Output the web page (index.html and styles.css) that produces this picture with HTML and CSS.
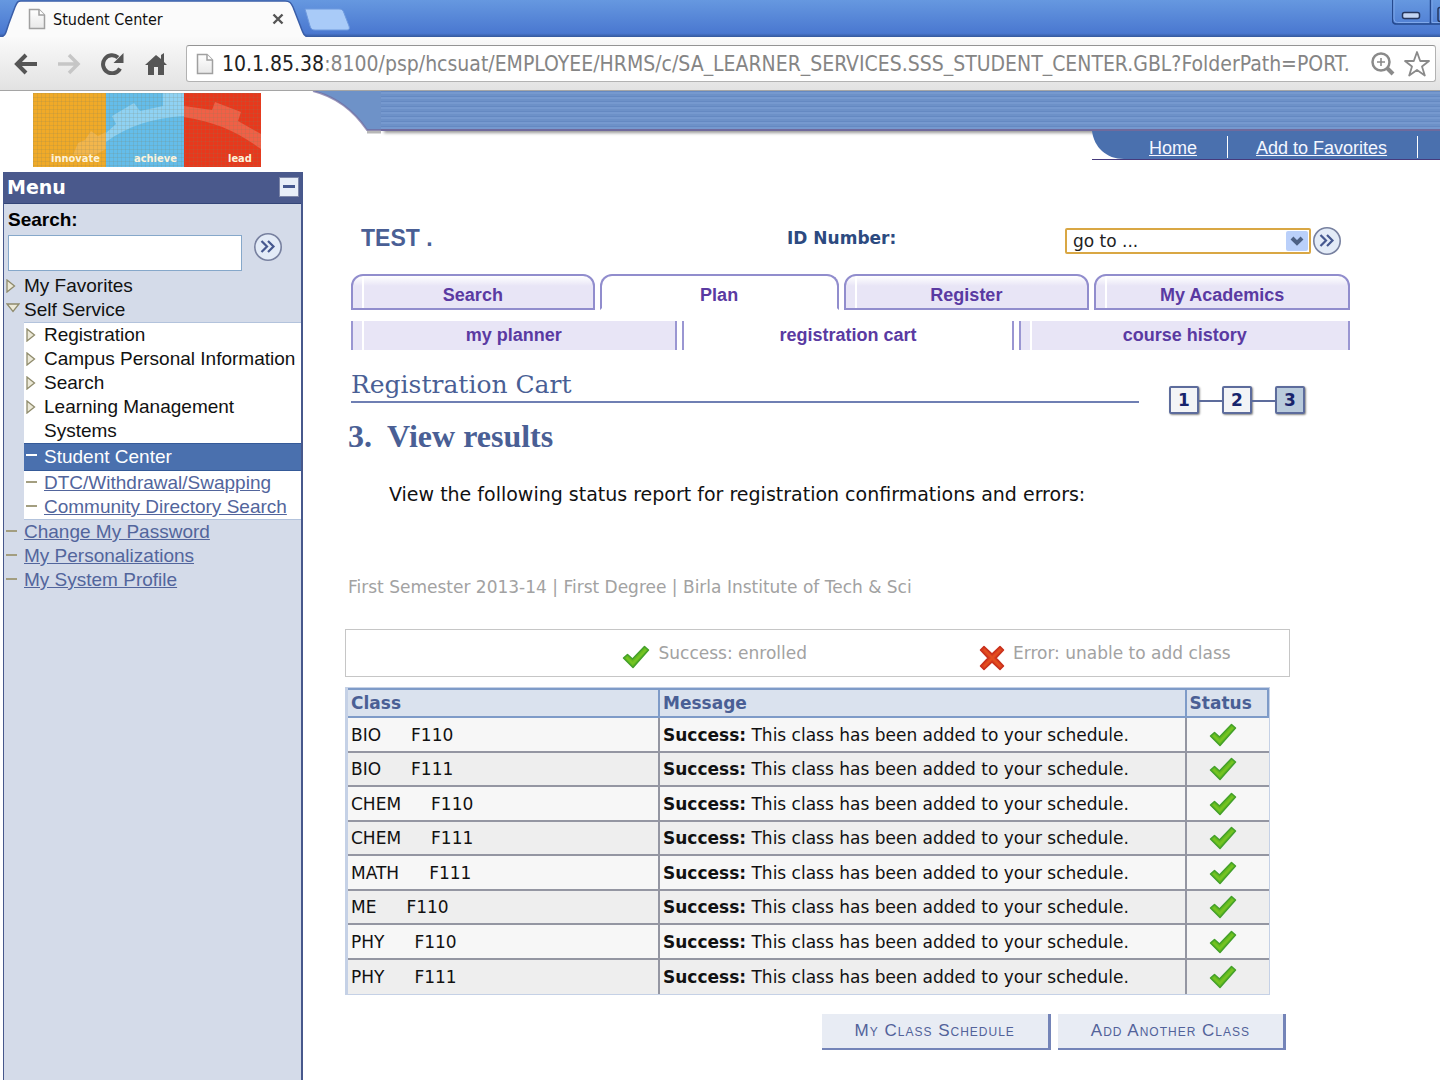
FILE: index.html
```html
<!DOCTYPE html>
<html lang="en">
<head>
    <meta charset="UTF-8">
    <meta name="viewport" content="width=device-width, initial-scale=1.0">
    <title>Student Center</title>
    <link rel="stylesheet" href="styles.css">
</head>
<body>
    <!-- shared icons -->
    <svg class="icon-defs" aria-hidden="true">
        <defs>
            <linearGradient id="page-fill" x1="0" y1="0" x2="0" y2="1">
                <stop offset="0" stop-color="#ffffff"/>
                <stop offset="1" stop-color="#e8e8e8"/>
            </linearGradient>
        </defs>
        <symbol id="icon-page" viewBox="0 0 18 22">
            <path d="M1.5 1.5h9.500l5.500 5.500v13.500h-15z" fill="url(#page-fill)" stroke="#a0a0a0" stroke-width="1.500"/>
            <path d="M11 1.500v5.500h5.500" fill="#fff" stroke="#a0a0a0" stroke-width="1.500"/>
        </symbol>
        <symbol id="icon-check" viewBox="0 0 28 24">
            <path d="M1.500 13l4-3.500 5 4.500L22.500 1.500l4 3.500L11 22.500z" fill="#66ba1e" stroke="#43a02a" stroke-width="1.500" stroke-linejoin="round"/>
            <path d="M4.500 12.500l6.200 6L24 4.500" fill="none" stroke="#74c424" stroke-width="2"/>
        </symbol>
        <symbol id="icon-cross" viewBox="0 0 26 26">
            <path d="M1.500 5L5 1.500l8 7.500 8-7.500L24.500 5 17 13l7.500 8-3.500 3.500-8-7.500-8 7.500L1.500 21 9 13z" fill="#dc3f1e" stroke="#c8301c" stroke-width="1.500" stroke-linejoin="round"/>
            <path d="M5 4.500L21.500 21.500M21.500 4.500L5 21.500" stroke="#e2501f" stroke-width="2"/>
        </symbol>
        <symbol id="icon-go" viewBox="0 0 30 30">
            <circle cx="15" cy="15" r="13.200" fill="#e3ebf7" stroke="#77809f" stroke-width="1.600"/>
            <path d="M8.500 9l5.500 5.500L8.500 20M15 9l5.500 5.500L15 20" fill="none" stroke="#46588f" stroke-width="2.200"/>
        </symbol>
        <symbol id="icon-right" viewBox="0 0 10 14">
            <path d="M1 1v12l7.500-6z" fill="#ece9d8" stroke="#8f8b6c" stroke-width="1.300"/>
        </symbol>
        <symbol id="icon-down" viewBox="0 0 14 10">
            <path d="M1 1h12l-6 7.500z" fill="#ece9d8" stroke="#8f8b6c" stroke-width="1.300"/>
        </symbol>
    </svg>

    <div class="browser">
        <div class="tab-strip">
            <svg class="tab-shape" viewBox="0 0 352 38" aria-hidden="true">
                <path d="M0 37C6 37 6 31 9 23L15 7c2-5 3-6 6-6h264c5 0 6 2 8 6l7 18c3 8 4 12 9 12v2H0z" fill="#fbfbfb" stroke="#3a5ea8" stroke-width="1.500"/>
                <path d="M305 9h34c3 0 4 1 5 4l5 13c1 3 0 4-2 4h-32c-3 0-4-1-5-4z" fill="#a9cbf8" stroke="#6f9ade"/>
            </svg>
            <div class="tab-label">
                <svg width="18" height="22"><use href="#icon-page"/></svg>
                <span>Student Center</span>
                <button class="icon-button" aria-label="Close tab">
                    <svg width="12" height="12" viewBox="0 0 12 12"><path d="M1.500 1.500l9 9M10.500 1.500l-9 9" stroke="#555" stroke-width="2.400"/></svg>
                </button>
            </div>
            <svg class="window-controls" width="48" height="26" viewBox="0 0 48 26" aria-hidden="true">
                <path d="M.500-1v21q0 4 4 4H50M38.500-1v25" fill="none" stroke="#25498e" stroke-width="1.500"/>
                <path d="M2-1v20q0 3.500 3.500 3.500H37M40-1v23.500h10" fill="none" stroke="#7fa8ea"/>
                <rect x="10.500" y="12.500" width="17" height="6" rx="2" fill="#c4d5f2" stroke="#26375e" stroke-width="1.500"/>
                <path d="M50 7.500h-2q-2 0-2 2v10q0 2 2 2h2" fill="none" stroke="#26375e" stroke-width="1.500"/>
            </svg>
        </div>
        <div class="toolbar">
            <button class="icon-button" aria-label="Back">
                <svg width="24" height="22" viewBox="0 0 24 22"><path d="M3 11h20M12 2L3 11l9 9" fill="none" stroke="#555" stroke-width="4"/></svg>
            </button>
            <button class="icon-button" aria-label="Forward">
                <svg width="24" height="22" viewBox="0 0 24 22"><path d="M21 11H1M12 2l9 9-9 9" fill="none" stroke="#c6c6c6" stroke-width="3.500"/></svg>
            </button>
            <button class="icon-button" aria-label="Reload">
                <svg width="24" height="22" viewBox="0 0 24 22"><path d="M20 15.500A9 9 0 1 1 18 4.500" fill="none" stroke="#555" stroke-width="4"/><path d="M23.500 0v10H13.500z" fill="#555"/></svg>
            </button>
            <button class="icon-button" aria-label="Home page">
                <svg width="24" height="24" viewBox="0 0 24 24"><path d="M13 3L2 13h3v10h6v-8h4v8h6V13h3l-3-3V1l-3 2v4z" fill="#555"/></svg>
            </button>
            <div class="address-bar">
                <svg width="18" height="22"><use href="#icon-page"/></svg>
                <div class="url" role="textbox" aria-label="Address" contenteditable="true" spellcheck="false"><span class="host">10.1.85.38</span>:8100/psp/hcsuat/EMPLOYEE/HRMS/c/SA_LEARNER_SERVICES.SSS_STUDENT_CENTER.GBL?FolderPath=PORT.</div>
                <button class="icon-button" aria-label="Zoom">
                    <svg width="24" height="24" viewBox="0 0 24 24"><circle cx="10" cy="10" r="8.500" fill="none" stroke="#8a8a8a" stroke-width="2.500"/><path d="M6 10h8M10 6v8" stroke="#8a8a8a" stroke-width="1.600"/><path d="M16 16l6 6" stroke="#8a8a8a" stroke-width="4"/></svg>
                </button>
                <button class="icon-button" aria-label="Bookmark this page">
                    <svg width="28" height="28" viewBox="0 0 28 28"><path d="M14 2l3.200 9H26l-7 5.500 2.800 9L14 20l-7.800 5.500 2.800-9L2 11h8.800z" fill="#fff" stroke="#8a8a8a" stroke-width="1.800" stroke-linejoin="round"/></svg>
                </button>
            </div>
        </div>
    </div>

    <header class="page-header">
        <div class="logo">
            <svg width="228" height="74" viewBox="0 0 228 74">
                <defs>
                    <pattern id="weave" width="4" height="4" patternUnits="userSpaceOnUse">
                        <path d="M0 .500h4M.500 0v4" stroke="#7a7a60" stroke-opacity=".16"/>
                    </pattern>
                </defs>
                <rect width="73" height="74" fill="#f0aa28"/>
                <rect x="73" width="78" height="74" fill="#64bdea"/>
                <rect x="151" width="77" height="74" fill="#e8381c"/>
                <path d="M40 62l5-12 7-3 6-9 7 5 8-4v17L62 62z" fill="#f3b64c"/>
                <path d="M73 40l10-9-4-8 22-13 6 8 23-5V0h21v23c-32 2-56 10-78 26z" fill="#8fd2f3"/>
                <path d="M151 13l28 4 3-8 26 10-3 9 23 13v15c-25-18-46-27-77-32z" fill="#f06046"/>
                <rect width="228" height="74" fill="url(#weave)"/>
                <g class="logo-words">
                    <text x="18" y="69">innovate</text>
                    <text x="101" y="69">achieve</text>
                    <text x="195" y="69">lead</text>
                </g>
            </svg>
        </div>
        <div class="banner">
            <div class="banner-stripes">
                <svg width="72" height="44" viewBox="0 0 72 44" aria-hidden="true">
                    <path d="M58 41h14" stroke="#999" stroke-width="3" opacity=".7"/>
                    <path d="M4 0h68v39H58C45 20 28 6 4 0z" fill="#6e92c8"/>
                    <path d="M4 0C28 6 45 20 58 39h14" fill="none" stroke="#706a9c" stroke-width="2" opacity=".7"/>
                </svg>
                <div class="stripes"></div>
            </div>
            <nav class="top-nav">
                <svg width="32" height="29" viewBox="0 0 32 29" aria-hidden="true"><path d="M0 0h32v28C14 28 2 16 0 0z" fill="#4a70ae"/><path d="M0 28.500h32" stroke="#463a7c"/></svg>
                <div class="top-links">
                    <a href="#">Home</a>
                    <a href="#">Add to Favorites</a>
                </div>
            </nav>
        </div>
    </header>

    <div class="layout">
        <aside class="menu">
            <div class="menu-title">
                <h2>Menu</h2>
                <button class="icon-button" aria-label="Collapse menu">
                    <svg width="20" height="20" viewBox="0 0 20 20"><rect x=".500" y=".500" width="19" height="19" fill="#e8eef8" stroke="#7d86a8"/><path d="M4 9.500h12" stroke="#46588f" stroke-width="3"/></svg>
                </button>
            </div>
            <form class="menu-search">
                <label for="menu-search">Search:</label>
                <div class="search-row">
                    <input type="text" id="menu-search">
                    <button type="button" class="icon-button" aria-label="Search the menu"><svg width="30" height="30"><use href="#icon-go"/></svg></button>
                </div>
            </form>
            <ul class="menu-list">
                <li><svg width="10" height="14"><use href="#icon-right"/></svg><a href="#" class="folder">My Favorites</a></li>
                <li><svg width="14" height="10"><use href="#icon-down"/></svg><a href="#" class="folder">Self Service</a></li>
            </ul>
            <ul class="menu-list submenu">
                <li><svg width="10" height="14"><use href="#icon-right"/></svg><a href="#" class="folder">Registration</a></li>
                <li><svg width="10" height="14"><use href="#icon-right"/></svg><a href="#" class="folder">Campus Personal Information</a></li>
                <li><svg width="10" height="14"><use href="#icon-right"/></svg><a href="#" class="folder">Search</a></li>
                <li><svg width="10" height="14"><use href="#icon-right"/></svg><a href="#" class="folder">Learning Management<br>Systems</a></li>
                <li class="current"><i class="dash"></i><a href="#">Student Center</a></li>
                <li><i class="dash"></i><a href="#">DTC/Withdrawal/Swapping</a></li>
                <li><i class="dash"></i><a href="#">Community Directory Search</a></li>
            </ul>
            <ul class="menu-list">
                <li><i class="dash"></i><a href="#">Change My Password</a></li>
                <li><i class="dash"></i><a href="#">My Personalizations</a></li>
                <li><i class="dash"></i><a href="#">My System Profile</a></li>
            </ul>
        </aside>

        <main class="content">
            <div class="student-row">
                <span class="student-name">TEST .</span>
                <span class="student-id">ID Number:</span>
                <div class="goto">
                    <div class="select-box">
                        <select aria-label="Go to">
                            <option>go to ...</option>
                        </select>
                        <svg width="22" height="20" viewBox="0 0 22 20" aria-hidden="true"><rect width="22" height="20" rx="2" fill="#bad0fa"/><path d="M6 7l5 5 5-5" fill="none" stroke="#4d6185" stroke-width="4"/></svg>
                    </div>
                    <button class="icon-button" aria-label="Go"><svg width="30" height="30"><use href="#icon-go"/></svg></button>
                </div>
            </div>

            <nav class="tabs">
                <a href="#">Search</a>
                <a href="#" class="active">Plan</a>
                <a href="#">Register</a>
                <a href="#">My Academics</a>
            </nav>
            <nav class="subtabs">
                <a href="#">my planner</a>
                <a href="#" class="active">registration cart</a>
                <a href="#">course history</a>
            </nav>

            <div class="title-row">
                <h1>Registration Cart</h1>
                <ol class="steps">
                    <li>1</li>
                    <li>2</li>
                    <li class="current">3</li>
                </ol>
            </div>
            <h2 class="step-title"><span>3.</span>View results</h2>
            <p class="intro">View the following status report for registration confirmations and errors:</p>
            <p class="term">First Semester 2013-14 | First Degree | Birla Institute of Tech &amp; Sci</p>

            <div class="legend">
                <div class="legend-item"><svg width="28" height="24"><use href="#icon-check"/></svg><span>Success: enrolled</span></div>
                <div class="legend-item"><svg width="26" height="26"><use href="#icon-cross"/></svg><span>Error: unable to add class</span></div>
            </div>

            <table class="results">
                <thead>
                    <tr><th class="col-class">Class</th><th class="col-message">Message</th><th class="col-status">Status</th></tr>
                </thead>
                <tbody>
                    <tr><td>BIO<span>F110</span></td><td><b>Success:</b> This class has been added to your schedule.</td><td><svg width="28" height="24" role="img" aria-label="Success"><use href="#icon-check"/></svg></td></tr>
                    <tr><td>BIO<span>F111</span></td><td><b>Success:</b> This class has been added to your schedule.</td><td><svg width="28" height="24" role="img" aria-label="Success"><use href="#icon-check"/></svg></td></tr>
                    <tr><td>CHEM<span>F110</span></td><td><b>Success:</b> This class has been added to your schedule.</td><td><svg width="28" height="24" role="img" aria-label="Success"><use href="#icon-check"/></svg></td></tr>
                    <tr><td>CHEM<span>F111</span></td><td><b>Success:</b> This class has been added to your schedule.</td><td><svg width="28" height="24" role="img" aria-label="Success"><use href="#icon-check"/></svg></td></tr>
                    <tr><td>MATH<span>F111</span></td><td><b>Success:</b> This class has been added to your schedule.</td><td><svg width="28" height="24" role="img" aria-label="Success"><use href="#icon-check"/></svg></td></tr>
                    <tr><td>ME<span>F110</span></td><td><b>Success:</b> This class has been added to your schedule.</td><td><svg width="28" height="24" role="img" aria-label="Success"><use href="#icon-check"/></svg></td></tr>
                    <tr><td>PHY<span>F110</span></td><td><b>Success:</b> This class has been added to your schedule.</td><td><svg width="28" height="24" role="img" aria-label="Success"><use href="#icon-check"/></svg></td></tr>
                    <tr><td>PHY<span>F111</span></td><td><b>Success:</b> This class has been added to your schedule.</td><td><svg width="28" height="24" role="img" aria-label="Success"><use href="#icon-check"/></svg></td></tr>
                </tbody>
            </table>

            <div class="actions">
                <button>My Class Schedule</button>
                <button>Add Another Class</button>
            </div>
        </main>
    </div>
</body>
</html>
```
FILE: styles.css
```css
* {
    box-sizing: border-box;
}
body {
    margin: 0;
    min-height: 100vh;
    display: flex;
    flex-direction: column;
    background-color: white;
    color: #111;
    font-family: "DejaVu Sans", Verdana, sans-serif;
    font-size: 17px;
}
h1, h2, p, ul, ol {
    margin: 0;
    padding: 0;
}
ul, ol {
    list-style: none;
}
svg {
    display: block;
    flex-shrink: 0;
}
.icon-defs {
    position: absolute;
    width: 0;
    height: 0;
}
.icon-button {
    display: block;
    flex-shrink: 0;
    padding: 0;
    border: 0;
    background: none;
    cursor: pointer;
}

/* browser frame */
.tab-strip {
    position: relative;
    display: flex;
    justify-content: space-between;
    align-items: flex-start;
    height: 37px;
    background: linear-gradient(#6698e0, #4a78d0 90%, #34589c);
}
.tab-shape {
    position: absolute;
    left: 0;
    top: 0;
    width: 352px;
    height: 38px;
}
.tab-label {
    position: relative;
    display: flex;
    align-items: center;
    gap: 7px;
    width: 284px;
    height: 38px;
    padding-left: 28px;
    font-family: "DejaVu Sans Condensed", Tahoma, sans-serif;
    font-size: 16px;
}
.tab-label span {
    flex: 1;
}
.toolbar {
    position: relative;
    display: flex;
    align-items: center;
    gap: 19px;
    height: 54px;
    padding: 0 4px 0 14px;
    border-bottom: 1px solid #a5a5a5;
    background: linear-gradient(#fafafa, #e2e2e2);
}
.address-bar {
    flex: 1;
    display: flex;
    align-items: center;
    gap: 8px;
    min-width: 0;
    height: 37px;
    padding: 0 4px 0 9px;
    border: 1px solid #b2b2b2;
    border-top-color: #949494;
    border-radius: 3px;
    background-color: white;
}
.url {
    flex: 1;
    min-width: 0;
    overflow: hidden;
    white-space: nowrap;
    font-family: "DejaVu Sans Condensed", Tahoma, sans-serif;
    font-size: 21px;
    color: #858585;
}
.host {
    color: #222;
}

/* page header */
.page-header {
    display: flex;
    height: 81px;
}
.logo {
    width: 303px;
    padding: 2px 0 0 33px;
}
.logo-words {
    font-family: "DejaVu Sans Condensed", sans-serif;
    font-size: 11px;
    font-weight: bold;
    fill: #fdf3da;
}
.banner {
    flex: 1;
    display: flex;
    flex-direction: column;
    align-items: flex-end;
}
.banner-stripes {
    display: flex;
    width: 100%;
    height: 40px;
    padding-left: 6px;
}
.stripes {
    flex: 1;
    height: 40px;
    border-bottom: 2px solid #706a9c;
    background: repeating-linear-gradient(#6589c2 0 1px, #7699cf 1px 3px, #6d91c8 3px 5px);
    box-shadow: 3px 2px 3px #999;
}
.top-nav {
    position: relative;
    display: flex;
}
.top-links {
    display: flex;
    width: 316px;
    height: 29px;
    padding: 5px 0 0 25px;
    border-bottom: 1px solid #463a7c;
    background-color: #4a70ae;
}
.top-links a {
    height: 22px;
    margin-right: 28px;
    padding-right: 30px;
    border-right: 1px solid white;
    color: #f4f7ff;
    font-family: "Liberation Sans", Arial, sans-serif;
    font-size: 18px;
    line-height: 24px;
    white-space: nowrap;
}

/* left menu */
.layout {
    flex: 1;
    display: flex;
}
.menu {
    width: 300px;
    margin-left: 3px;
    border: 1px solid #47588c;
    border-width: 0 2px 0 1px;
    background-color: #d4dbe9;
    font-family: "Liberation Sans", Arial, sans-serif;
    font-size: 19px;
    line-height: 24px;
}
.menu-title {
    display: flex;
    justify-content: space-between;
    align-items: center;
    height: 32px;
    padding: 0 2px 2px 3px;
    border-bottom: 1px solid #344678;
    background-color: #4a598c;
}
.menu-title h2 {
    color: white;
    font-family: "DejaVu Sans", Verdana, sans-serif;
    font-size: 19px;
}
.menu-search {
    padding: 4px 4px 3px;
}
.menu-search label {
    color: black;
    font-weight: bold;
}
.search-row {
    display: flex;
    align-items: flex-start;
    gap: 11px;
}
.search-row input {
    width: 234px;
    height: 36px;
    margin-top: 3px;
    border: 1px solid #86a8ca;
    background-color: white;
    font-size: 18px;
}
.menu-list li {
    display: flex;
    position: relative;
    padding-left: 20px;
}
.menu-list li > svg,
.dash {
    position: absolute;
    left: 2px;
    top: 5px;
}
.dash {
    top: 10px;
    width: 11px;
    height: 2px;
    background-color: #a39e80;
}
.menu-list a {
    color: #52659c;
    white-space: nowrap;
}
.menu-list a.folder {
    color: #111;
    text-decoration: none;
}
.submenu {
    margin-left: 20px;
    border: 1px solid #b3c3dc;
    border-width: 1px 0;
    background-color: white;
}
.menu-list .current {
    padding-top: 1px;
    padding-bottom: 1px;
    border: 1px solid #355a98;
    border-width: 1px 0;
    background-color: #4a70ae;
}
.menu-list .current a {
    color: white;
    text-decoration: none;
}
.current .dash {
    background-color: white;
}

/* content */
.content {
    flex: 1;
    min-width: 0;
    padding: 54px 90px 20px 42px;
}
.student-row {
    display: grid;
    grid-template-columns: 426px 1fr auto;
    height: 30px;
    padding: 0 8px 0 16px;
    line-height: 24px;
}
.student-name {
    color: #4a5f95;
    font-family: "Liberation Sans", Arial, sans-serif;
    font-size: 23px;
    font-weight: bold;
}
.student-id {
    color: #2c4a80;
    font-weight: bold;
}
.goto {
    display: flex;
    align-items: center;
    gap: 1px;
}
.select-box {
    position: relative;
}
.select-box select {
    appearance: none;
    display: block;
    width: 246px;
    height: 26px;
    padding: 0 30px 0 6px;
    border: 2px solid #d9a744;
    border-radius: 2px;
    background-color: white;
    color: #222;
    font-family: "DejaVu Sans", Verdana, sans-serif;
    font-size: 17px;
}
.select-box svg {
    position: absolute;
    right: 3px;
    top: 3px;
    pointer-events: none;
}
.tabs,
.subtabs {
    display: grid;
    column-gap: 5px;
    padding-left: 6px;
    font-family: "Liberation Sans", Arial, sans-serif;
    font-size: 18px;
    font-weight: bold;
}
.tabs {
    grid-template-columns: 244fr 239fr 246fr 256fr;
    margin-top: 18px;
}
.tabs a,
.subtabs a {
    display: flex;
    justify-content: center;
    align-items: center;
    color: #5a3aa2;
    text-decoration: none;
}
.tabs a {
    height: 36px;
    padding-top: 6px;
    border: 2px solid #918dcd;
    border-radius: 12px 12px 0 0;
    background: linear-gradient(90deg, transparent 9px, white 9px 11px, transparent 11px), linear-gradient(white, #e8e5f6 10px);
}
.tabs a.active {
    border-bottom-color: transparent;
    background: none;
}
.subtabs {
    grid-template-columns: 326fr 333fr 331fr;
    margin-top: 11px;
}
.subtabs a {
    height: 29px;
    border: 2px solid #9a96d2;
    border-width: 0 2px;
    background: linear-gradient(90deg, #e8e5f6 9px, white 9px 11px, #e8e5f6 11px);
}
.subtabs a.active {
    background: none;
}
.title-row {
    display: flex;
    justify-content: space-between;
    align-items: flex-start;
    padding: 18px 45px 0 6px;
}
.title-row h1 {
    flex: 1;
    height: 35px;
    margin-right: 30px;
    border-bottom: 2px solid #6f7fb3;
    color: #4a5f95;
    font-family: "DejaVu Serif", Georgia, serif;
    font-size: 25px;
    font-weight: normal;
    line-height: 34px;
}
.steps {
    display: flex;
    margin-top: 18px;
    gap: 23px;
}
.steps li {
    position: relative;
    width: 30px;
    height: 28px;
    border: 2px solid #5d6c9c;
    border-radius: 2px;
    background-color: #f3f4f6;
    box-shadow: 1px 1px 2px #888;
    color: #18246c;
    font-size: 17px;
    font-weight: bold;
    line-height: 24px;
    text-align: center;
}
.steps li + li::before {
    content: "";
    position: absolute;
    right: 28px;
    top: 12px;
    width: 23px;
    height: 2px;
    background-color: #5d6c9c;
}
.steps li.current {
    background-color: #b9cbdc;
}
.step-title {
    display: flex;
    gap: 15px;
    padding-left: 3px;
    color: #4a5f95;
    font-family: "Liberation Serif", Georgia, serif;
    font-size: 32px;
    line-height: 44px;
}
.intro {
    padding: 24px 0 0 44px;
    font-size: 19px;
    line-height: 24px;
}
.term {
    padding: 69px 0 0 3px;
    color: #a2a2a2;
    line-height: 24px;
}
.legend {
    display: flex;
    justify-content: flex-end;
    gap: 172px;
    width: 94%;
    height: 48px;
    margin-top: 30px;
    padding: 11px 58px 0 0;
    border: 1px solid #c6c6c6;
    color: #a2a2a2;
    line-height: 24px;
}
.legend-item {
    display: flex;
    gap: 8px;
}
.legend-item svg {
    margin-top: 4px;
}

/* results table */
.results {
    width: 92%;
    margin-top: 10px;
    border: 1px solid #c5d1e6;
    border-left-width: 3px;
    border-collapse: separate;
    border-spacing: 0;
    table-layout: fixed;
}
.results th {
    height: 30px;
    padding: 0 3px;
    border: 2px solid #7e9bc8;
    border-left-width: 0;
    background-color: #dae2ee;
    color: #4a5f95;
    text-align: left;
}
.col-class {
    width: 312px;
}
.col-status {
    width: 82px;
}
.results td {
    height: 35px;
    padding: 0 3px;
    border-right: 2px solid #9496a2;
    border-bottom: 2px solid #9496a2;
    background-color: #f7f7f7;
    white-space: nowrap;
}
.results tr:nth-child(even) td {
    height: 34px;
    background-color: #eee;
}
.results td:last-child {
    padding-right: 12px;
    border-right: 0;
}
.results tbody tr:last-child td {
    border-bottom: 0;
}
.results td span {
    margin-left: 30px;
}
.results td svg {
    margin: 0 auto;
}
.actions {
    display: flex;
    justify-content: flex-end;
    gap: 7px;
    margin-top: 19px;
    padding-right: 64px;
}
.actions button {
    height: 36px;
    padding: 0 33px;
    border: 0 solid #7484b8;
    border-width: 0 3px 2px 0;
    background-color: #e8ecf4;
    color: #52629a;
    font-family: "Liberation Sans", Arial, sans-serif;
    font-size: 17px;
    font-variant: small-caps;
    letter-spacing: 1px;
}
```
